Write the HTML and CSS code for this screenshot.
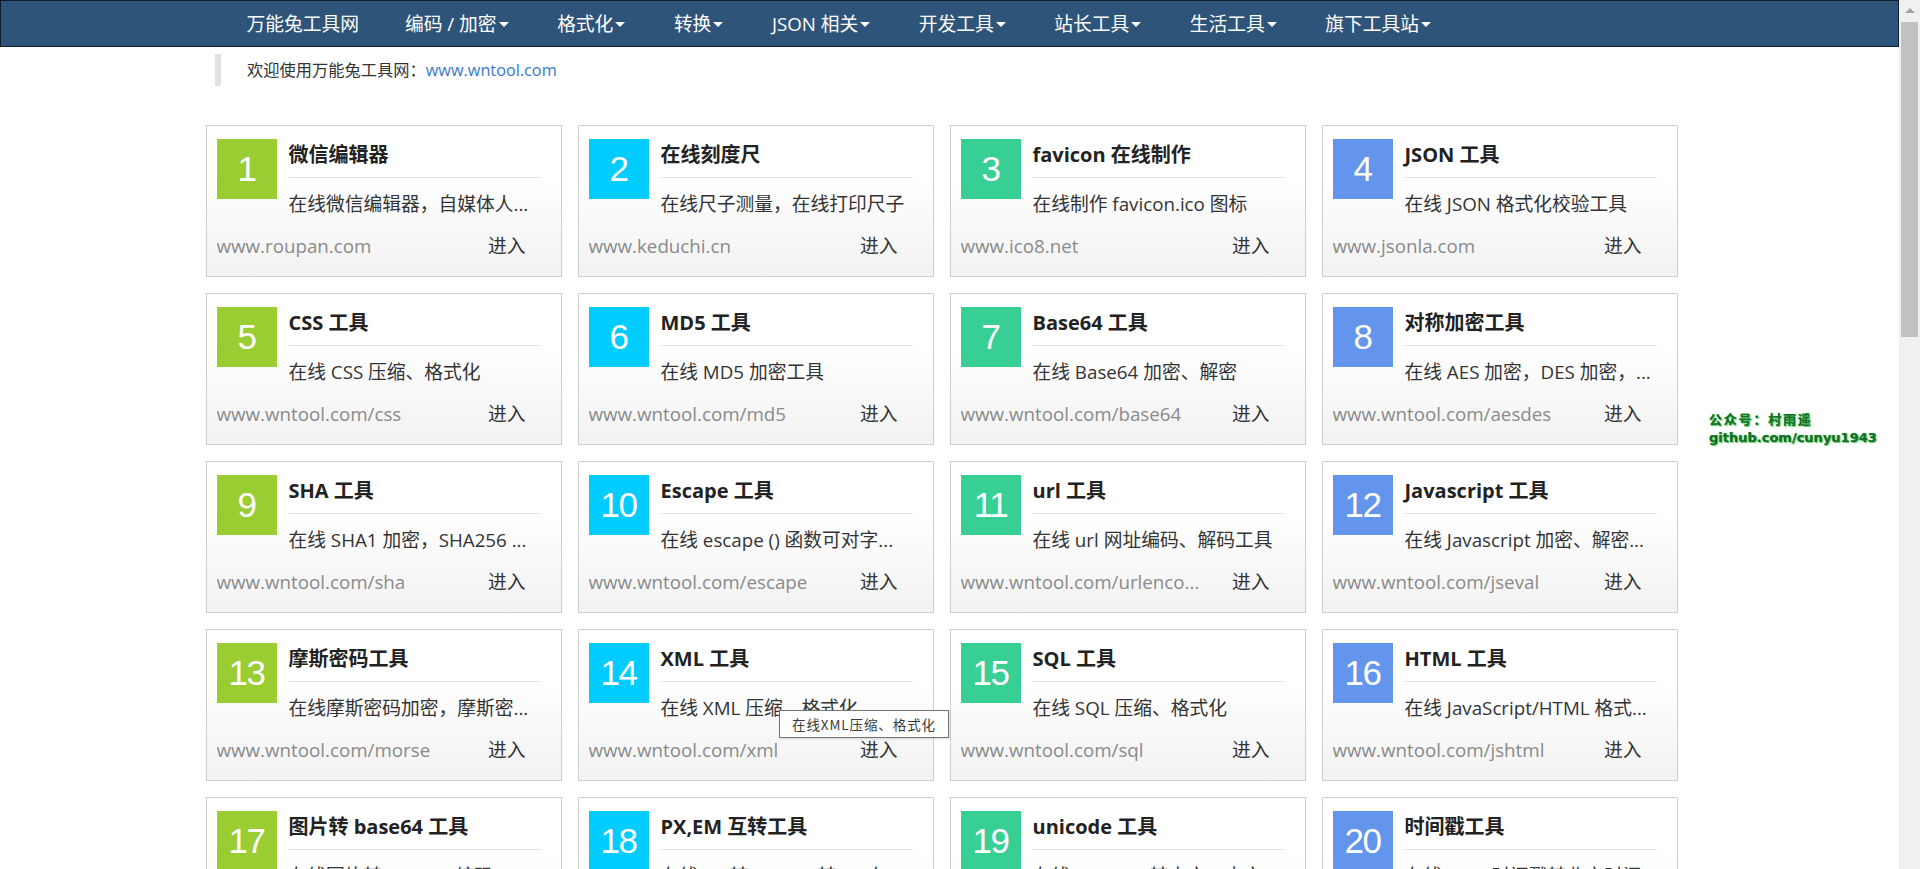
FILE: index.html
```html
<!DOCTYPE html>
<html lang="zh-CN">
<head>
<meta charset="utf-8">
<title>万能兔工具网</title>
<link rel="stylesheet" href="styles.css">
</head>
<body>
<div class="page">
  <nav class="topnav">
    <div class="wrap">
      <ul class="menu">
        <li><a>万能兔工具网</a></li>
        <li><a>编码 / 加密<span class="caret"></span></a></li>
        <li><a>格式化<span class="caret"></span></a></li>
        <li><a>转换<span class="caret"></span></a></li>
        <li><a>JSON 相关<span class="caret"></span></a></li>
        <li><a>开发工具<span class="caret"></span></a></li>
        <li><a>站长工具<span class="caret"></span></a></li>
        <li><a>生活工具<span class="caret"></span></a></li>
        <li><a>旗下工具站<span class="caret"></span></a></li>
      </ul>
    </div>
  </nav>

  <div class="wrap">
    <blockquote class="welcome">欢迎使用万能兔工具网：<a class="link">www.wntool.com</a></blockquote>

    <div class="grid">
      <div class="card"><div class="top"><div class="num c1">1</div><div class="info"><div class="title">微信编辑器</div><div class="desc">在线微信编辑器，自媒体人...</div></div></div><div class="foot"><span class="url">www.roupan.com</span><a class="go">进入</a></div></div>
      <div class="card"><div class="top"><div class="num c2">2</div><div class="info"><div class="title">在线刻度尺</div><div class="desc">在线尺子测量，在线打印尺子</div></div></div><div class="foot"><span class="url">www.keduchi.cn</span><a class="go">进入</a></div></div>
      <div class="card"><div class="top"><div class="num c3">3</div><div class="info"><div class="title">favicon 在线制作</div><div class="desc">在线制作 favicon.ico 图标</div></div></div><div class="foot"><span class="url">www.ico8.net</span><a class="go">进入</a></div></div>
      <div class="card"><div class="top"><div class="num c4">4</div><div class="info"><div class="title">JSON 工具</div><div class="desc">在线 JSON 格式化校验工具</div></div></div><div class="foot"><span class="url">www.jsonla.com</span><a class="go">进入</a></div></div>

      <div class="card"><div class="top"><div class="num c1">5</div><div class="info"><div class="title">CSS 工具</div><div class="desc">在线 CSS 压缩、格式化</div></div></div><div class="foot"><span class="url">www.wntool.com/css</span><a class="go">进入</a></div></div>
      <div class="card"><div class="top"><div class="num c2">6</div><div class="info"><div class="title">MD5 工具</div><div class="desc">在线 MD5 加密工具</div></div></div><div class="foot"><span class="url">www.wntool.com/md5</span><a class="go">进入</a></div></div>
      <div class="card"><div class="top"><div class="num c3">7</div><div class="info"><div class="title">Base64 工具</div><div class="desc">在线 Base64 加密、解密</div></div></div><div class="foot"><span class="url">www.wntool.com/base64</span><a class="go">进入</a></div></div>
      <div class="card"><div class="top"><div class="num c4">8</div><div class="info"><div class="title">对称加密工具</div><div class="desc">在线 AES 加密，DES 加密，...</div></div></div><div class="foot"><span class="url">www.wntool.com/aesdes</span><a class="go">进入</a></div></div>

      <div class="card"><div class="top"><div class="num c1">9</div><div class="info"><div class="title">SHA 工具</div><div class="desc">在线 SHA1 加密，SHA256 ...</div></div></div><div class="foot"><span class="url">www.wntool.com/sha</span><a class="go">进入</a></div></div>
      <div class="card"><div class="top"><div class="num c2">10</div><div class="info"><div class="title">Escape 工具</div><div class="desc">在线 escape () 函数可对字...</div></div></div><div class="foot"><span class="url">www.wntool.com/escape</span><a class="go">进入</a></div></div>
      <div class="card"><div class="top"><div class="num c3">11</div><div class="info"><div class="title">url 工具</div><div class="desc">在线 url 网址编码、解码工具</div></div></div><div class="foot"><span class="url">www.wntool.com/urlenco...</span><a class="go">进入</a></div></div>
      <div class="card"><div class="top"><div class="num c4">12</div><div class="info"><div class="title">Javascript 工具</div><div class="desc">在线 Javascript 加密、解密...</div></div></div><div class="foot"><span class="url">www.wntool.com/jseval</span><a class="go">进入</a></div></div>

      <div class="card"><div class="top"><div class="num c1">13</div><div class="info"><div class="title">摩斯密码工具</div><div class="desc">在线摩斯密码加密，摩斯密...</div></div></div><div class="foot"><span class="url">www.wntool.com/morse</span><a class="go">进入</a></div></div>
      <div class="card"><div class="top"><div class="num c2">14</div><div class="info"><div class="title">XML 工具</div><div class="desc">在线 XML 压缩、格式化</div></div></div><div class="foot"><span class="url">www.wntool.com/xml</span><a class="go">进入</a></div></div>
      <div class="card"><div class="top"><div class="num c3">15</div><div class="info"><div class="title">SQL 工具</div><div class="desc">在线 SQL 压缩、格式化</div></div></div><div class="foot"><span class="url">www.wntool.com/sql</span><a class="go">进入</a></div></div>
      <div class="card"><div class="top"><div class="num c4">16</div><div class="info"><div class="title">HTML 工具</div><div class="desc">在线 JavaScript/HTML 格式...</div></div></div><div class="foot"><span class="url">www.wntool.com/jshtml</span><a class="go">进入</a></div></div>

      <div class="card"><div class="top"><div class="num c1">17</div><div class="info"><div class="title">图片转 base64 工具</div><div class="desc">在线图片转 Base64 编码</div></div></div><div class="foot"><span class="url">www.wntool.com/img2base64</span><a class="go">进入</a></div></div>
      <div class="card"><div class="top"><div class="num c2">18</div><div class="info"><div class="title">PX,EM 互转工具</div><div class="desc">在线 PX 转 EM,EM 转 PX 在...</div></div></div><div class="foot"><span class="url">www.wntool.com/pxem</span><a class="go">进入</a></div></div>
      <div class="card"><div class="top"><div class="num c3">19</div><div class="info"><div class="title">unicode 工具</div><div class="desc">在线 unicode 转中文，中文...</div></div></div><div class="foot"><span class="url">www.wntool.com/unicode</span><a class="go">进入</a></div></div>
      <div class="card"><div class="top"><div class="num c4">20</div><div class="info"><div class="title">时间戳工具</div><div class="desc">在线 Unix 时间戳转北京时间...</div></div></div><div class="foot"><span class="url">www.wntool.com/timestamp</span><a class="go">进入</a></div></div>
    </div>
  </div>

  <div class="follow"><span class="follow-cn">公众号：村雨遥</span><br>github.com/cunyu1943</div>
  <div class="tooltip">在线XML压缩、格式化</div>
</div>
<div class="scrollbar"><div class="sb-arrow"></div><div class="sb-thumb"></div></div>
</body>
</html>
```
FILE: styles.css
```css
html, body {
  margin: 0;
  padding: 0;
  overflow: hidden;
  background: #fff;
}
body {
  font-family: "Open Sans", "Noto Sans CJK SC", sans-serif;
  color: #333;
}
.page {
  position: relative;
  width: 1899px;
  height: 869px;
  overflow: hidden;
}
.wrap {
  width: 1488px;
  margin: 0 auto;
}

/* top navigation */
.topnav {
  background: #2f5479;
  border: 1px solid #0e1c2b;
  height: 45px;
}
.menu {
  list-style: none;
  margin: 0;
  padding: 0 0 0 41px;
  display: flex;
  height: 45px;
  align-items: center;
}
.menu li {
  margin-right: 46px;
}
.menu a {
  color: #fff;
  font-size: 18.75px;
  line-height: 45px;
  white-space: nowrap;
}
.caret {
  display: inline-block;
  width: 0;
  height: 0;
  border-top: 5px solid #fff;
  border-left: 5px solid transparent;
  border-right: 5px solid transparent;
  vertical-align: middle;
  margin: -2px 2.5px 0 2px;
}

/* welcome */
.welcome {
  margin: 7px 0 0 9.5px;
  padding: 0 0 0 26px;
  border-left: 6px solid #e1e1e1;
  height: 32px;
  line-height: 32px;
  font-size: 16.25px;
  color: #333;
}
.link {
  color: #3a78c9;
}

/* grid of cards */
.grid {
  margin-top: 39px;
  display: grid;
  grid-template-columns: repeat(4, 356px);
  grid-auto-rows: 152px;
  gap: 16px;
}
.card {
  box-sizing: border-box;
  border: 1px solid #cfcfcf;
  background: linear-gradient(to bottom, #ffffff 0%, #ffffff 35%, #f2f2f2 100%);
  padding: 13px 20px 0 10px;
  overflow: hidden;
}
.top {
  display: flex;
  gap: 12px;
}
.num {
  flex: none;
  width: 60px;
  height: 60px;
  color: #fff;
  font-family: "Liberation Sans", Arial, sans-serif;
  font-size: 35px;
  letter-spacing: -1.5px;
  line-height: 60px;
  text-align: center;
}
.c1 { background: #9acd32; }
.c2 { background: #00ccff; }
.c3 { background: #38cf94; }
.c4 { background: #6495ed; }
.info {
  flex: 1;
  min-width: 0;
}
.title {
  font-size: 20px;
  font-weight: bold;
  color: #222;
  line-height: 28px;
  padding: 2px 0 8px;
  border-bottom: 1px solid #e2e2e2;
  white-space: nowrap;
}
.desc {
  margin-top: 12px;
  font-size: 18.75px;
  line-height: 28px;
  color: #333;
  white-space: nowrap;
  overflow: hidden;
}
.foot {
  display: flex;
  justify-content: space-between;
  align-items: center;
  margin-top: 14px;
  padding-right: 15px;
  line-height: 28px;
  font-size: 18.75px;
}
.url {
  color: #8a8a8a;
  white-space: nowrap;
  overflow: hidden;
  max-width: 250px;
}
.go {
  color: #333;
}

/* overlays */
.follow {
  position: absolute;
  left: 1709px;
  top: 410px;
  font-family: "DejaVu Sans", "Noto Sans CJK SC", sans-serif;
  font-weight: bold;
  font-size: 13px;
  line-height: 18px;
  color: #1c6a2c;
  text-shadow: 0 0 1px #36c24f, 1px 1px 1px #4cd060;
}
.follow-cn {
  font-family: "Noto Sans CJK SC", sans-serif;
  font-size: 13px;
  letter-spacing: 1.8px;
}
.tooltip {
  position: absolute;
  left: 779px;
  top: 710px;
  width: 170px;
  height: 28px;
  box-sizing: border-box;
  border: 1px solid #767676;
  background: #fff;
  color: #3a3a3a;
  font-family: "Noto Sans CJK SC", sans-serif;
  font-size: 13.5px;
  letter-spacing: 0.9px;
  line-height: 26px;
  text-align: center;
  box-shadow: 1px 1px 2px rgba(0,0,0,0.15);
}

/* fake scrollbar */
.scrollbar {
  position: fixed;
  top: 0;
  right: 0;
  width: 21px;
  height: 869px;
  background: #f0f0f0;
}
.sb-arrow {
  width: 0;
  height: 0;
  margin: 8px auto 0;
  border-bottom: 5px solid #a3a3a3;
  border-left: 5px solid transparent;
  border-right: 5px solid transparent;
}
.sb-thumb {
  margin: 9px 0 0 2px;
  width: 17px;
  height: 315px;
  background: #c1c1c1;
}
```
